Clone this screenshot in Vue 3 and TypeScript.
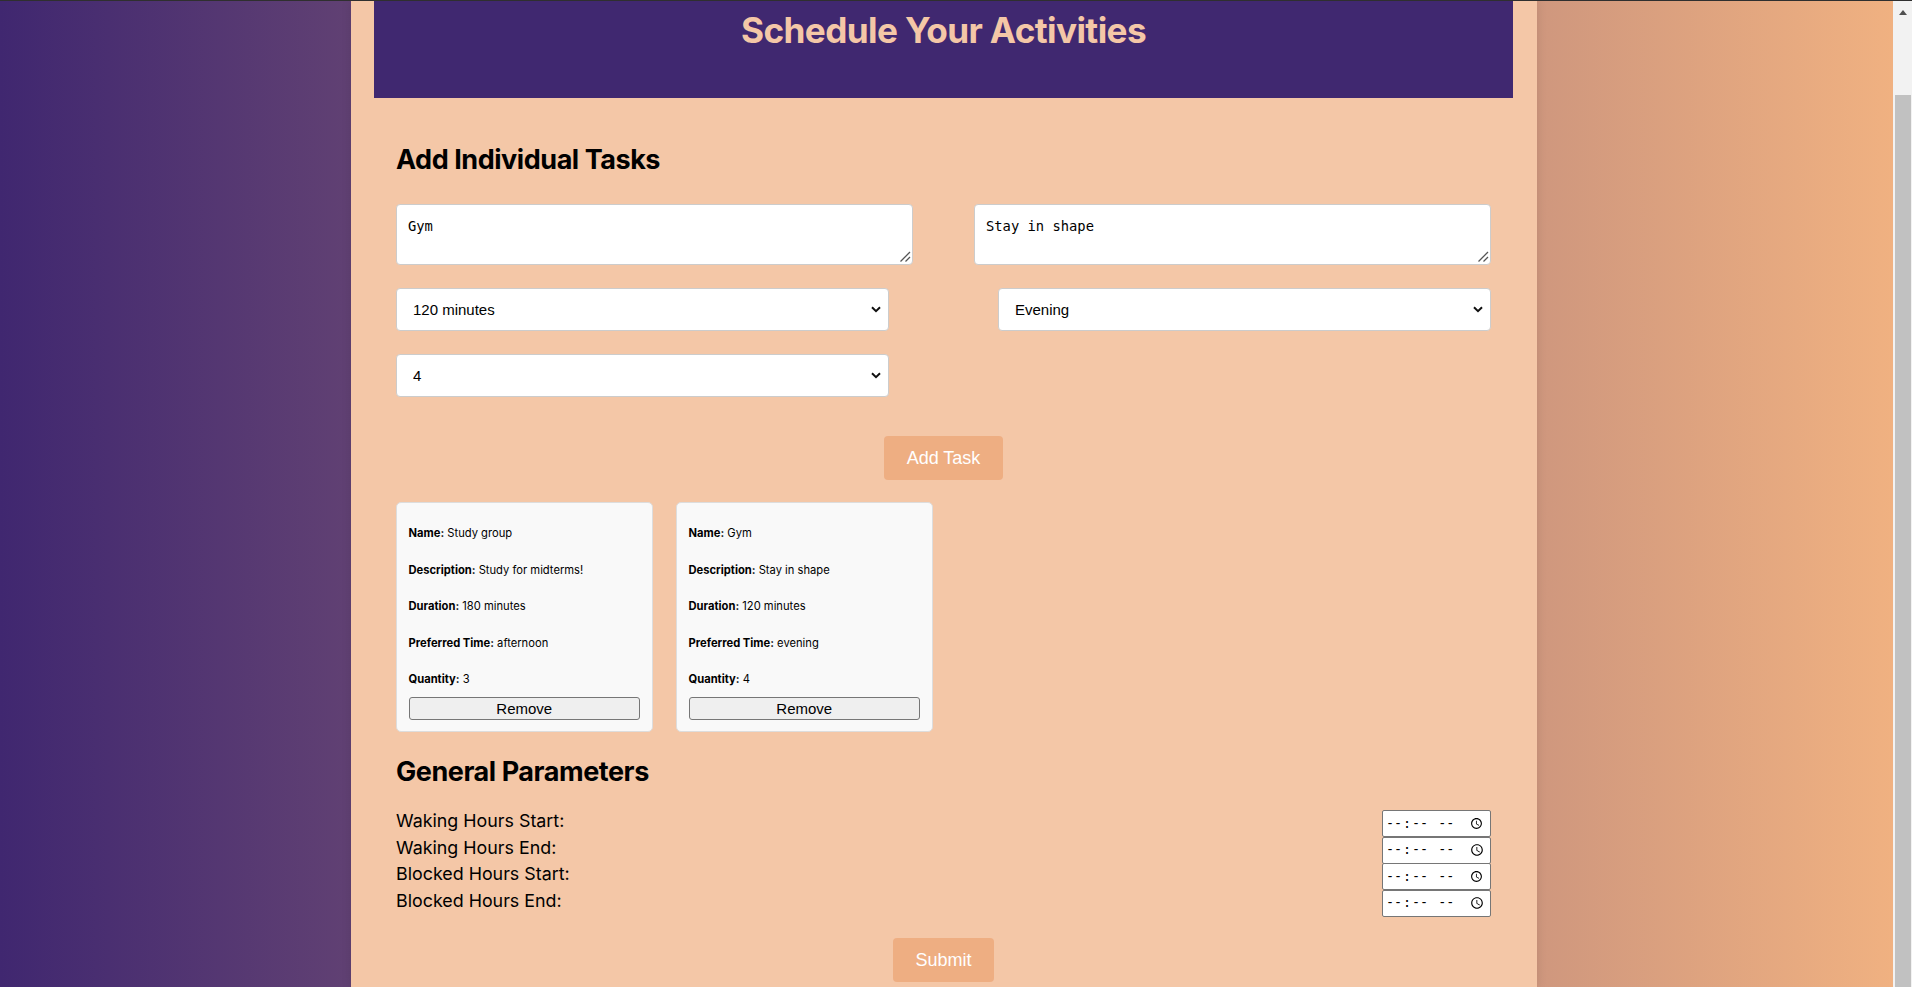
<script setup lang="ts">
interface Task { name: string; description: string; duration: number; time: string; quantity: number }
const tasks: Task[] = [
  { name: 'Study group', description: 'Study for midterms!', duration: 180, time: 'afternoon', quantity: 3 },
  { name: 'Gym', description: 'Stay in shape', duration: 120, time: 'evening', quantity: 4 },
]
const params: string[] = ['Waking Hours Start:', 'Waking Hours End:', 'Blocked Hours Start:', 'Blocked Hours End:']
</script>

<template>
  <div class="viewport">
    <div class="page">
      <main class="container">
        <header class="banner"><h1>Schedule Your Activities</h1></header>
        <section class="content">
          <h2 class="first">Add Individual Tasks</h2>
          <div class="row">
            <textarea class="text" readonly>Gym</textarea>
            <textarea class="text" readonly>Stay in shape</textarea>
          </div>
          <div class="row">
            <select class="pick"><option>120 minutes</option></select>
            <select class="pick"><option>Evening</option></select>
          </div>
          <div class="row">
            <select class="pick"><option>4</option></select>
          </div>
          <div class="center add"><button class="action">Add Task</button></div>
          <div class="cards">
            <article v-for="t in tasks" :key="t.name" class="card">
              <p><strong>Name:</strong> {{ t.name }}</p>
              <p><strong>Description:</strong> {{ t.description }}</p>
              <p><strong>Duration:</strong> {{ t.duration }} minutes</p>
              <p><strong>Preferred Time:</strong> {{ t.time }}</p>
              <p><strong>Quantity:</strong> {{ t.quantity }}</p>
              <button class="remove">Remove</button>
            </article>
          </div>
          <h2 class="second">General Parameters</h2>
          <div class="params">
            <label v-for="p in params" :key="p" class="param">
              <span>{{ p }}</span>
              <input type="time" class="time" />
            </label>
          </div>
          <div class="center"><button class="action">Submit</button></div>
        </section>
      </main>
    </div>
    <aside class="scrollbar">
      <span class="arrow"></span>
      <span class="thumb"></span>
    </aside>
  </div>
</template>

<style>
html, body { margin: 0; height: 100%; overflow: hidden; }
</style>

<style scoped>
.viewport {
  display: flex;
  height: 986px;
  border-top: 1px solid #2f2f2f;
  overflow: hidden;
  font-family: Inter, "Liberation Sans", sans-serif;
  color: #000;
}
.page {
  flex: 1;
  min-width: 0;
  background: linear-gradient(to right, #402770, #f0b181);
}
.container {
  box-sizing: border-box;
  width: 1186px;
  height: 100%;
  margin-left: 351px;
  padding: 0 24px 0 23px;
  background: #f4c7a7;
  box-shadow: 0 0 10px rgba(0, 0, 0, 0.1);
  overflow: hidden;
}
.banner {
  height: 97px;
  background: #402870;
  text-align: center;
}
.banner h1 {
  margin: 0;
  padding-top: 8px;
  font-size: 35.2px;
  line-height: 42px;
  font-weight: 700;
  letter-spacing: -0.62px;
  color: #f4c7a7;
}
.content { padding: 0 22px; }
h2 {
  margin: 0;
  font-size: 27px;
  line-height: 32px;
  font-weight: 700;
  letter-spacing: -0.45px;
}
.first { padding-top: 46px; margin-bottom: 28px; }
.second { margin-top: 24px; margin-bottom: 22px; }
.row {
  display: flex;
  justify-content: space-between;
  margin-bottom: 23px;
}
.text {
  box-sizing: border-box;
  width: 517px;
  height: 61px;
  padding: 13px 11px;
  border: 1px solid #ccc;
  border-radius: 4px;
  background: #fff url("data:image/svg+xml,%3Csvg xmlns='http://www.w3.org/2000/svg' width='12' height='12'%3E%3Cpath d='M1.5 10.5 11 1M6.5 10.5 11 6' stroke='%23555' stroke-width='1.3' fill='none'/%3E%3C/svg%3E") no-repeat right 1px bottom 1px;
  color: #000;
  font-family: "DejaVu Sans Mono", monospace;
  font-size: 13.8px;
  outline: none;
  resize: none;
}
.pick {
  box-sizing: border-box;
  width: 493px;
  height: 43px;
  padding: 0 16px;
  border: 1px solid #ccc;
  border-radius: 4px;
  appearance: none;
  background: #fff url("data:image/svg+xml,%3Csvg xmlns='http://www.w3.org/2000/svg' width='10' height='7'%3E%3Cpath d='M1 1.2 5 5.2 9 1.2' stroke='%23111' stroke-width='2' fill='none'/%3E%3C/svg%3E") no-repeat right 7px center;
  color: #000;
  font-family: "Liberation Sans", sans-serif;
  font-size: 15px;
}
.center { display: flex; justify-content: center; }
.add { margin: 39px 0 22px; }
.action {
  height: 44px;
  padding: 0 22.5px;
  border: none;
  border-radius: 4px;
  background: #eeae82;
  color: #fff;
  font-family: "Liberation Sans", sans-serif;
  font-size: 18px;
}
.cards { display: flex; gap: 23.5px; }
.card {
  box-sizing: border-box;
  width: 256.5px;
  height: 230px;
  padding: 12px 11.5px;
  border: 1px solid #ddd;
  border-radius: 5px;
  background: #f9f9f9;
  font-size: 11.2px;
  line-height: 14px;
}
.card p { margin: 11px 0 22.6px; }
.card p:last-of-type { margin-bottom: 11px; }
.remove {
  display: block;
  box-sizing: border-box;
  width: 100%;
  height: 23px;
  padding: 0;
  border: 1px solid #767676;
  border-radius: 3px;
  background: #efefef;
  color: #000;
  font-family: "Liberation Sans", sans-serif;
  font-size: 15px;
}
.params { margin-bottom: 22px; }
.param {
  display: flex;
  justify-content: space-between;
  align-items: flex-start;
  height: 26.5px;
  font-size: 17.85px;
  line-height: 21px;
}
.time {
  box-sizing: border-box;
  width: 109px;
  height: 27px;
  padding: 1px 3px 1px 2px;
  border: 1px solid #767676;
  border-radius: 2px;
  background: #fff;
  font-family: "DejaVu Sans Mono", monospace;
  font-size: 13.33px;
}
.scrollbar {
  flex: 0 0 19px;
  display: flex;
  flex-direction: column;
  align-items: flex-end;
  background: #f2f2f2;
}
.arrow {
  align-self: center;
  width: 0;
  height: 0;
  margin-top: 9px;
  border-left: 4px solid transparent;
  border-right: 4px solid transparent;
  border-bottom: 5px solid #505050;
}
.thumb {
  width: 16px;
  flex: 1;
  margin: 80px 1px 0 0;
  background: #c1c1c1;
}
</style>
